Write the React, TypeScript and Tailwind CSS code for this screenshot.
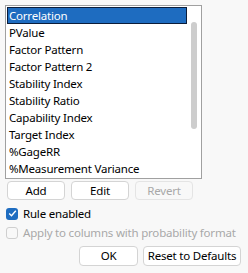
import React from "react";

const items = [
  "Correlation",
  "PValue",
  "Factor Pattern",
  "Factor Pattern 2",
  "Stability Index",
  "Stability Ratio",
  "Capability Index",
  "Target Index",
  "%GageRR",
  "%Measurement Variance",
];

export default function App() {
  return (
    <div
      className="w-[248px] h-[273px] bg-[#f8f8f8] text-black text-[11.5px] tracking-[-0.2px] leading-none overflow-hidden"
      style={{ fontFamily: '"Noto Sans", "Open Sans", sans-serif' }}
    >
      <div className="pt-[5px] pl-[5px]">
        <div className="w-[197px] h-[174px] border border-[#a0a0a0] bg-white flex overflow-hidden">
          <div className="w-[181px] pl-[1px] pt-[1px] flex flex-col">
            {items.map((it, i) =>
              i === 0 ? (
                <div
                  key={it}
                  className="h-[17px] w-[180px] shrink-0 bg-[#1e6cc0] border border-[#0b1d3a] text-white flex items-center pl-[1px] whitespace-nowrap"
                >
                  {it}
                </div>
              ) : (
                <div
                  key={it}
                  className="h-[17px] w-[180px] shrink-0 flex items-center pl-[2px] whitespace-nowrap"
                >
                  {it}
                </div>
              )
            )}
          </div>
          <div className="flex-1 flex justify-center pt-[16px]">
            <div className="w-[6px] h-[107px] rounded-full bg-[#cdcdcd]" />
          </div>
        </div>
      </div>
      <div className="flex gap-[6px] pl-[7px] mt-[2px]">
        <div className="w-[58px] h-[19px] rounded-[4px] border border-[#d4d4d4] bg-white flex items-center justify-center">
          Add
        </div>
        <div className="w-[58px] h-[19px] rounded-[4px] border border-[#d4d4d4] bg-white flex items-center justify-center">
          Edit
        </div>
        <div className="w-[58px] h-[19px] rounded-[4px] border border-[#e4e4e4] bg-[#f8f8f8] text-[#a8a8a8] flex items-center justify-center">
          Revert
        </div>
      </div>
      <div className="flex items-center pl-[6px] mt-[7px] h-[13px]">
        <div className="w-[12px] h-[12px] rounded-[3px] bg-[#1e6cc0] flex items-center justify-center">
          <svg width="9" height="9" viewBox="0 0 9 9">
            <path d="M1.2 4.6 L3.5 6.8 L7.8 1.8" stroke="white" strokeWidth="1.4" fill="none" />
          </svg>
        </div>
        <span className="ml-[5px]">Rule enabled</span>
      </div>
      <div className="flex items-center pl-[6px] mt-[6px] h-[13px] text-[#a8a8a8]">
        <div className="w-[12px] h-[12px] rounded-[3px] border border-[#cfcfcf] bg-[#f8f8f8]" />
        <span className="ml-[5px] whitespace-nowrap">Apply to columns with probability format</span>
      </div>
      <div className="flex gap-[5px] pl-[79px] mt-[7px]">
        <div className="w-[59px] h-[20px] rounded-[4px] border border-[#d4d4d4] bg-white flex items-center justify-center">
          OK
        </div>
        <div className="w-[98px] h-[20px] rounded-[4px] border border-[#d4d4d4] bg-white flex items-center justify-center">
          Reset to Defaults
        </div>
      </div>
    </div>
  );
}
